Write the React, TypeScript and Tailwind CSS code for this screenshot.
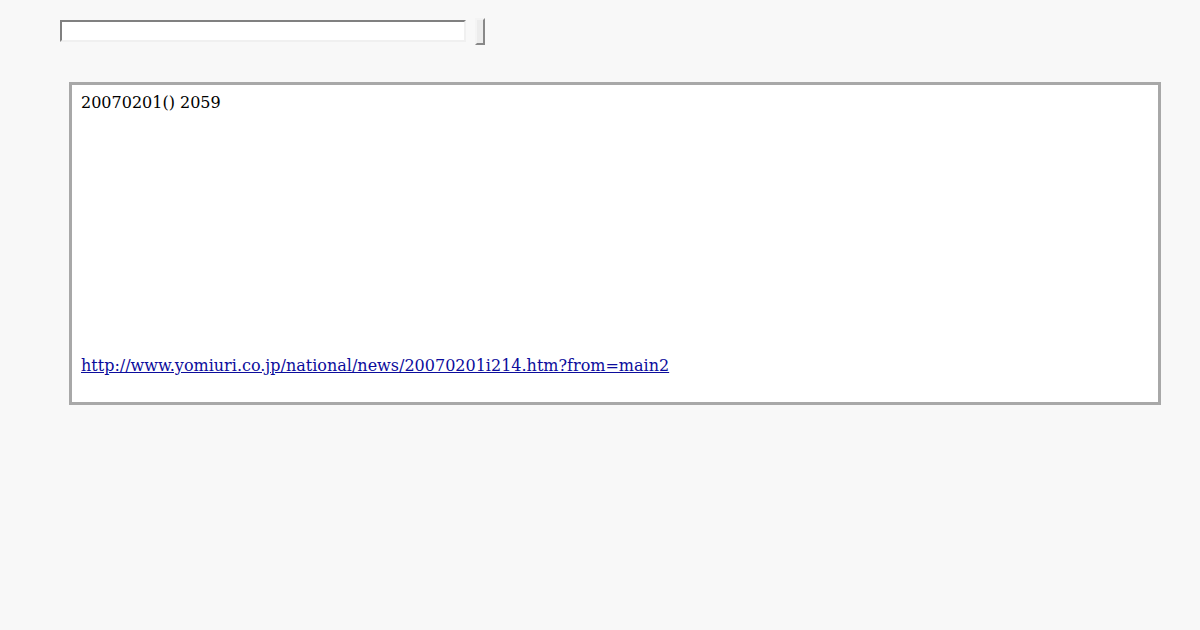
export default function App() {
  return (
    <div className="min-h-[630px] w-[1200px] bg-[#f8f8f8] font-['DejaVu_Serif',serif] text-[16px] text-black">
      {/* Search form */}
      <div className="flex items-start pl-[60px] pt-[18px]">
        <input
          type="text"
          className="mt-[2px] h-[22px] w-[406px] border-2 border-t-[#808080] border-l-[#808080] border-r-[#f0f0f0] border-b-[#f0f0f0] bg-white outline-none"
        />
        <button className="ml-[9px] h-[27px] w-[10px] border-2 border-t-[#f4f4f4] border-l-[#f4f4f4] border-r-[#888] border-b-[#888] bg-[#ececec]" />
      </div>

      {/* Article box */}
      <div className="ml-[69px] mt-[37px] flex h-[323px] w-[1092px] flex-col justify-between border-[3px] border-[#a8a8a8] bg-white px-[9px] pt-[6px] pb-[24px]">
        <div>20070201() 2059</div>
        <a href="#" className="text-[#0c0c9c] underline">
          http://www.yomiuri.co.jp/national/news/20070201i214.htm?from=main2
        </a>
      </div>
    </div>
  );
}
